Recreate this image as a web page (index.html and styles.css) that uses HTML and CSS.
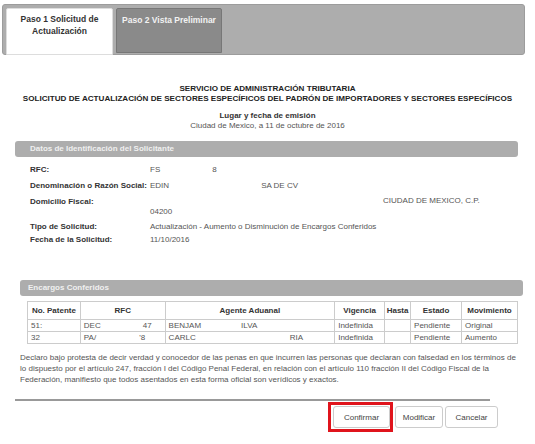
FILE: index.html
```html
<!DOCTYPE html>
<html lang="es">
<head>
    <meta charset="UTF-8">
    <title>Solicitud de Actualización</title>
    <link rel="stylesheet" href="styles.css">
</head>
<body>
    <div class="tabs">
        <div class="tab tab-active">Paso 1 Solicitud de<br>Actualización</div>
        <div class="tab tab-off">Paso 2 Vista Preliminar</div>
    </div>

    <div class="titles">
        <div>SERVICIO DE ADMINISTRACIÓN TRIBUTARIA</div>
        <div>SOLICITUD DE ACTUALIZACIÓN DE SECTORES ESPECÍFICOS DEL PADRÓN DE IMPORTADORES Y SECTORES ESPECÍFICOS</div>
    </div>

    <div class="place">
        <div class="place-label">Lugar y fecha de emisión</div>
        <div>Ciudad de Mexico, a 11 de octubre de 2016</div>
    </div>

    <div class="section-head head-datos">Datos de Identificación del Solicitante</div>
    <div class="fields">
        <div class="field row-rfc">
            <div class="label">RFC:</div>
            <div class="value">FS<span class="blank b-rfc"></span>8</div>
        </div>
        <div class="field row-den">
            <div class="label">Denominación o Razón Social:</div>
            <div class="value">EDIN<span class="blank b-den"></span>SA DE CV</div>
        </div>
        <div class="field row-dom">
            <div class="label label-dom">Domicilio Fiscal:</div>
            <div class="value value-dom">
                <div class="dom-city">CIUDAD DE MEXICO, C.P.</div>
                <div>04200</div>
            </div>
        </div>
        <div class="field row-tipo">
            <div class="label">Tipo de Solicitud:</div>
            <div class="value">Actualización - Aumento o Disminución de Encargos Conferidos</div>
        </div>
        <div class="field row-fecha">
            <div class="label">Fecha de la Solicitud:</div>
            <div class="value">11/10/2016</div>
        </div>
    </div>

    <div class="section-head head-encargos">Encargos Conferidos</div>
    <table class="grid">
        <thead>
            <tr>
                <th class="c-pat">No. Patente</th>
                <th class="c-rfc">RFC</th>
                <th class="c-agente">Agente Aduanal</th>
                <th class="c-vig">Vigencia</th>
                <th class="c-hasta">Hasta</th>
                <th class="c-estado">Estado</th>
                <th class="c-mov">Movimiento</th>
            </tr>
        </thead>
        <tbody>
            <tr>
                <td>51:</td>
                <td>DEC<span class="blank b-t1"></span>47</td>
                <td>BENJAM<span class="blank b-t2"></span>ILVA</td>
                <td>Indefinida</td>
                <td></td>
                <td>Pendiente</td>
                <td>Original</td>
            </tr>
            <tr>
                <td>32</td>
                <td>PA/<span class="blank b-t3"></span>'8</td>
                <td>CARLC<span class="blank b-t4"></span>RIA</td>
                <td>Indefinida</td>
                <td></td>
                <td>Pendiente</td>
                <td>Aumento</td>
            </tr>
        </tbody>
    </table>

    <p class="legal">Declaro bajo protesta de decir verdad y conocedor de las penas en que incurren las personas que declaran con falsedad en los términos de lo dispuesto por el artículo 247, fracción I del Código Penal Federal, en relación con el artículo 110 fracción II del Código Fiscal de la Federación, manifiesto que todos asentados en esta forma oficial son verídicos y exactos.</p>

    <div class="rule"></div>

    <div class="actions">
        <div class="highlight"><button class="btn btn-confirm">Confirmar</button></div>
        <button class="btn btn-mod">Modificar</button>
        <button class="btn btn-cancel">Cancelar</button>
    </div>
</body>
</html>
```

FILE: styles.css
```css
* {
    margin: 0;
    padding: 0;
    box-sizing: border-box;
}
body {
    width: 535px;
    font-family: "Liberation Sans", Arial, sans-serif;
    font-size: 8px;
    color: #444;
    background: #fff;
}

/* pestañas */
.tabs {
    display: flex;
    gap: 3px;
    width: 523px;
    height: 51px;
    margin: 4px 0 0 2px;
    padding: 3px 0 0 3px;
    background: #adadad;
    border: 1px solid #9c9c9c;
    border-radius: 3px;
}
.tab {
    width: 107px;
    font-weight: bold;
    font-size: 8.5px;
    text-align: center;
    border-radius: 2px 2px 0 0;
}
.tab-active {
    height: 47px;
    padding-top: 4px;
    line-height: 12px;
    background: #fff;
    color: #333;
    border: 1px solid #ddd;
}
.tab-off {
    width: 106px;
    height: 45px;
    padding-top: 6px;
    background: #8a8a8a;
    color: #f2f2f2;
    border: 1px solid #777;
}

/* encabezados */
.titles {
    margin-top: 29px;
    text-align: center;
    font-weight: bold;
    font-size: 8.1px;
    line-height: 10px;
    color: #222;
}
.place {
    margin-top: 7px;
    text-align: center;
    line-height: 10px;
    color: #555;
}
.place-label {
    font-weight: bold;
    color: #333;
}

.section-head {
    height: 16px;
    line-height: 16px;
    background: #adadad;
    color: #f0f0f0;
    font-weight: bold;
    border-radius: 3px;
}
.head-datos {
    width: 503px;
    margin: 10px 0 0 15px;
    padding-left: 15px;
}
.head-encargos {
    width: 503px;
    margin: 35px 0 0 20px;
    padding-left: 8px;
}

/* datos */
.fields {
    padding-left: 30px;
    line-height: 10px;
}
.field {
    display: grid;
    grid-template-columns: 120px 1fr;
}
.label {
    font-weight: bold;
    color: #333;
}
.value {
    color: #555;
}
.row-rfc { margin-top: 8px; }
.row-den { margin-top: 6px; }
.row-dom { margin-top: 4px; }
.row-tipo { margin-top: 5px; }
.row-fecha { margin-top: 3px; }
.label-dom {
    padding-top: 2px;
}
.value-dom {
    line-height: 11px;
}
.dom-city {
    padding-left: 233px;
}
.blank {
    display: inline-block;
}
.b-rfc { width: 52px; }
.b-den { width: 92px; }
.b-t1 { width: 42px; }
.b-t2 { width: 40px; }
.b-t3 { width: 43px; }
.b-t4 { width: 94px; }

/* tabla */
.grid {
    width: 491px;
    margin: 5px 0 0 27px;
    border-collapse: collapse;
    border: 1px solid #bbb;
    color: #555;
}
.grid th {
    height: 18px;
    font-weight: bold;
    color: #333;
    border: 1px solid #ccc;
}
.grid td {
    height: 12px;
    padding: 0 3px;
    border: 1px solid #ccc;
    line-height: 10px;
}
.c-pat { width: 53px; }
.c-rfc { width: 85px; }
.c-agente { width: 170px; }
.c-vig { width: 50px; }
.c-hasta { width: 26px; }
.c-estado { width: 51px; }
.c-mov { width: 56px; }

.legal {
    margin: 8px 16px 0 20px;
    line-height: 11px;
    color: #555;
}

.rule {
    width: 475px;
    height: 2px;
    margin: 14px 0 0 15px;
    background: #999;
}

.actions {
    display: flex;
    justify-content: flex-end;
    align-items: center;
    gap: 2px;
    margin: 1px 37px 0 0;
}
.highlight {
    border: 3px solid #e0141c;
    padding: 1px 0 1px 2px;
}
.btn {
    height: 22px;
    background: #fff;
    border: 1px solid #ccc;
    border-radius: 3px;
    font-family: "Liberation Sans", Arial, sans-serif;
    font-size: 8px;
    color: #444;
}
.btn-confirm { width: 57px; }
.btn-mod { width: 48px; }
.btn-cancel { width: 53px; }
```
